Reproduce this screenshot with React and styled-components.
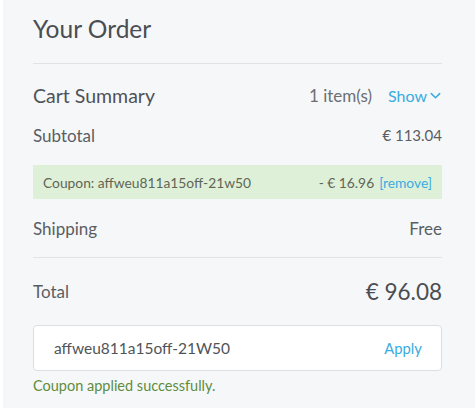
import React from "react";
import styled, { createGlobalStyle } from "styled-components";

const Global = createGlobalStyle`
  html, body { margin: 0; padding: 0; background: #ffffff; }
  body { font-family: "Lato", "Noto Sans", sans-serif; }
`;

const Panel = styled.div`
  margin-left: 3px;
  width: 472px;
  height: 408px;
  box-sizing: border-box;
  background: #f6f7f9;
  padding: 14px 33px 0 30px;
  color: #555a5f;
`;

const Title = styled.h2`
  margin: 0;
  font-size: 24.5px;
  font-weight: 400;
  line-height: 30px;
  color: #4a4d52;
`;

const Divider = styled.div`
  height: 1px;
  background: ${(p) => (p.$clear ? "transparent" : "#e1e3e6")};
  margin: ${(p) => p.$m || "0"};
`;

const Row = styled.div`
  display: flex;
  align-items: center;
  justify-content: space-between;
  height: ${(p) => p.$h || 30}px;
  font-size: ${(p) => p.$fs || 17}px;
  color: ${(p) => p.$color || "#5a5e63"};
`;

const Amount = styled.span`
  font-size: ${(p) => p.$fs || 15}px;
  color: ${(p) => p.$color || "#5a5e63"};
`;

const Right = styled.div`
  display: flex;
  align-items: center;
  gap: ${(p) => p.$gap || 0}px;
`;

const Muted = styled.span`
  color: #6b6f74;
  font-size: 17px;
`;

const Link = styled.span`
  color: #39ace0;
  font-size: ${(p) => p.$fs || 16}px;
  display: inline-flex;
  align-items: center;
  gap: 2px;
  cursor: pointer;
`;

const CouponBox = styled.div`
  display: flex;
  align-items: center;
  justify-content: space-between;
  height: 34px;
  background: #dff0d8;
  padding: 0 10px;
  font-size: 13.8px;
  color: #5f6656;
`;

const InputBox = styled.div`
  display: flex;
  align-items: center;
  justify-content: space-between;
  height: 46px;
  box-sizing: border-box;
  background: #fff;
  border: 1px solid #dcdee1;
  border-radius: 4px;
  padding: 0 19px 0 20px;
  font-size: 15.5px;
  color: #505458;
`;

const Success = styled.div`
  margin-top: 6px;
  font-size: 14.5px;
  color: #5e8d3c;
`;

export default function App() {
  return (
    <>
      <Global />
      <Panel>
        <Title>Your Order</Title>
        <Divider $m="19px 0 0" />
        <Row $h={63} $fs={19.5} $color="#4f5358">
          <span>Cart Summary</span>
          <Right $gap={16}>
            <Muted>1 item(s)</Muted>
            <Link>
              Show
              <svg width="13" height="13" viewBox="0 0 14 14" fill="none" stroke="#39ace0" strokeWidth="1.6" strokeLinecap="round" strokeLinejoin="round">
                <path d="M2.5 5l4.5 4.5L11.5 5" />
              </svg>
            </Link>
          </Right>
        </Row>
        <Row $h={16}>
          <span>Subtotal</span>
          <Amount>€ 113.04</Amount>
        </Row>
        <Divider $m="21px 0 0" $clear />
        <CouponBox>
          <span>Coupon: affweu811a15off-21w50</span>
          <Right $gap={5}>
            <span>- € 16.96</span>
            <Link $fs={13.8}>[remove]</Link>
          </Right>
        </CouponBox>
        <Row $h={58}>
          <span>Shipping</span>
          <span>Free</span>
        </Row>
        <Divider />
        <Row $h={67}>
          <span>Total</span>
          <Amount $fs={22.5} $color="#4a4d52">€ 96.08</Amount>
        </Row>
        <InputBox>
          <span>affweu811a15off-21W50</span>
          <Link $fs={14.8}>Apply</Link>
        </InputBox>
        <Success>Coupon applied successfully.</Success>
      </Panel>
    </>
  );
}
